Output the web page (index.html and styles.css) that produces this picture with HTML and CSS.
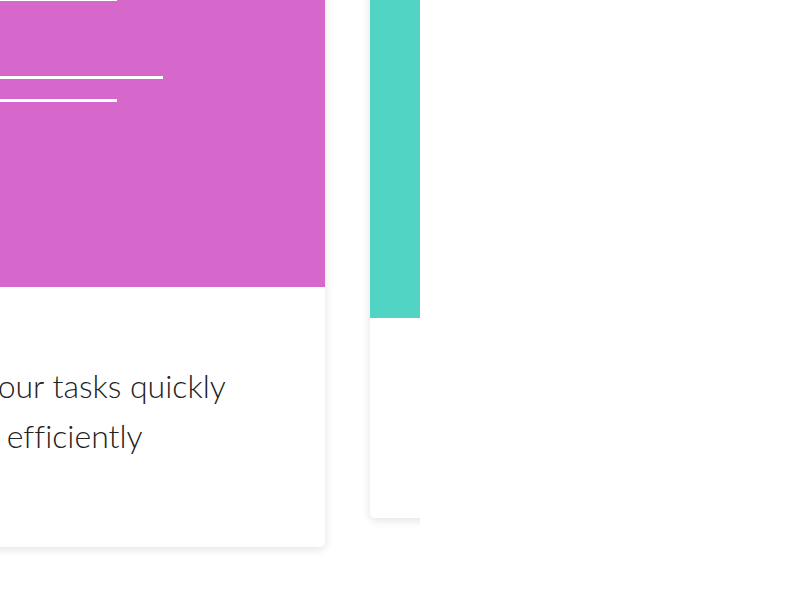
FILE: index.html
```html
<!DOCTYPE html>
<html>
<head>
<meta charset="utf-8">
<link rel="stylesheet" href="styles.css">
</head>
<body>
<div class="stage">
  <div class="track">
    <div class="card card-main">
      <div class="art art-purple">
        <span class="bar bar-short"></span>
        <span class="bar bar-long"></span>
        <span class="bar bar-short bar-close"></span>
      </div>
      <div class="body">
        <p class="caption">Manage your tasks quickly<br>and efficiently</p>
      </div>
    </div>
    <div class="card card-next">
      <div class="art art-teal"></div>
      <div class="body body-next"></div>
    </div>
  </div>
</div>
</body>
</html>
```
FILE: styles.css
```css
html, body {
  margin: 0;
  padding: 0;
  background: #ffffff;
}
.stage {
  width: 420px;
  height: 600px;
  overflow: hidden;
}
.track {
  display: flex;
  align-items: flex-start;
  gap: 45px;
  margin-left: -235px;
  margin-top: -60px;
}
.card {
  flex: 0 0 auto;
  background: #fff;
  border-radius: 5px;
  box-shadow: 0 2px 10px rgba(0, 0, 0, 0.12);
  overflow: hidden;
}
.card-main {
  width: 560px;
}
.card-next {
  width: 400px;
}
.art {
  display: flex;
  flex-direction: column;
  align-items: flex-start;
}
.art-purple {
  background: #d667cb;
  height: 347px;
  box-sizing: border-box;
  padding-top: 58px;
  padding-left: 135px;
}
.art-teal {
  background: #51d4c4;
  height: 378px;
}
.bar {
  display: block;
  height: 3px;
  background: #fff;
}
.bar-short {
  width: 217px;
}
.bar-long {
  width: 263px;
  margin-top: 75px;
}
.bar-close {
  margin-top: 20px;
}
.body {
  padding: 74px 20px 86px;
}
.body-next {
  height: 200px;
  padding: 0;
}
.caption {
  margin: 0;
  text-align: center;
  font-family: Lato, "Open Sans", sans-serif;
  font-weight: 300;
  font-size: 32px;
  line-height: 50px;
  font-variant-ligatures: none;
  color: #222;
}
```
